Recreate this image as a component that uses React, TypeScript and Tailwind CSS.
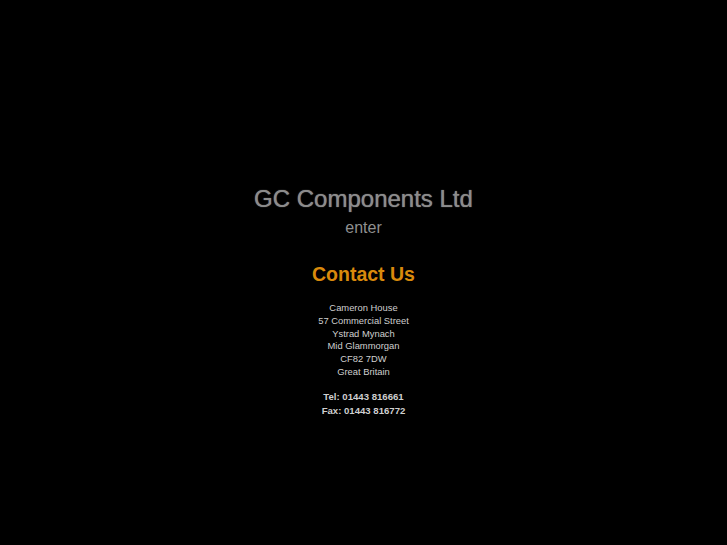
export default function App() {
  const address = [
    'Cameron House',
    '57 Commercial Street',
    'Ystrad Mynach',
    'Mid Glammorgan',
    'CF82 7DW',
    'Great Britain',
  ];

  return (
    <div className="min-h-[545px] w-full bg-black flex flex-col items-center pt-[184px] font-['Liberation_Sans',Arial,sans-serif]">
      <h1 className="text-[24px] leading-[30px] text-[#8c8c8c] [text-shadow:0_0_1px_#8c8c8c]">GC Components Ltd</h1>
      <a className="mt-[5px] text-[16px] leading-[18px] text-[#8f8f8f]">enter</a>

      <h2 className="mt-[25px] text-[19.5px] leading-[24px] font-bold text-[#d98a0c]">Contact Us</h2>

      <div className="mt-[16px] flex flex-col items-center text-[9.4px] leading-[12.8px] text-[#cfcfcf]">
        {address.map((line) => (
          <span key={line}>{line}</span>
        ))}
      </div>

      <div className="mt-[11px] flex flex-col items-center text-[9.6px] leading-[14px] font-bold text-[#cfcfcf]">
        <span>Tel: 01443 816661</span>
        <span>Fax: 01443 816772</span>
      </div>
    </div>
  );
}
